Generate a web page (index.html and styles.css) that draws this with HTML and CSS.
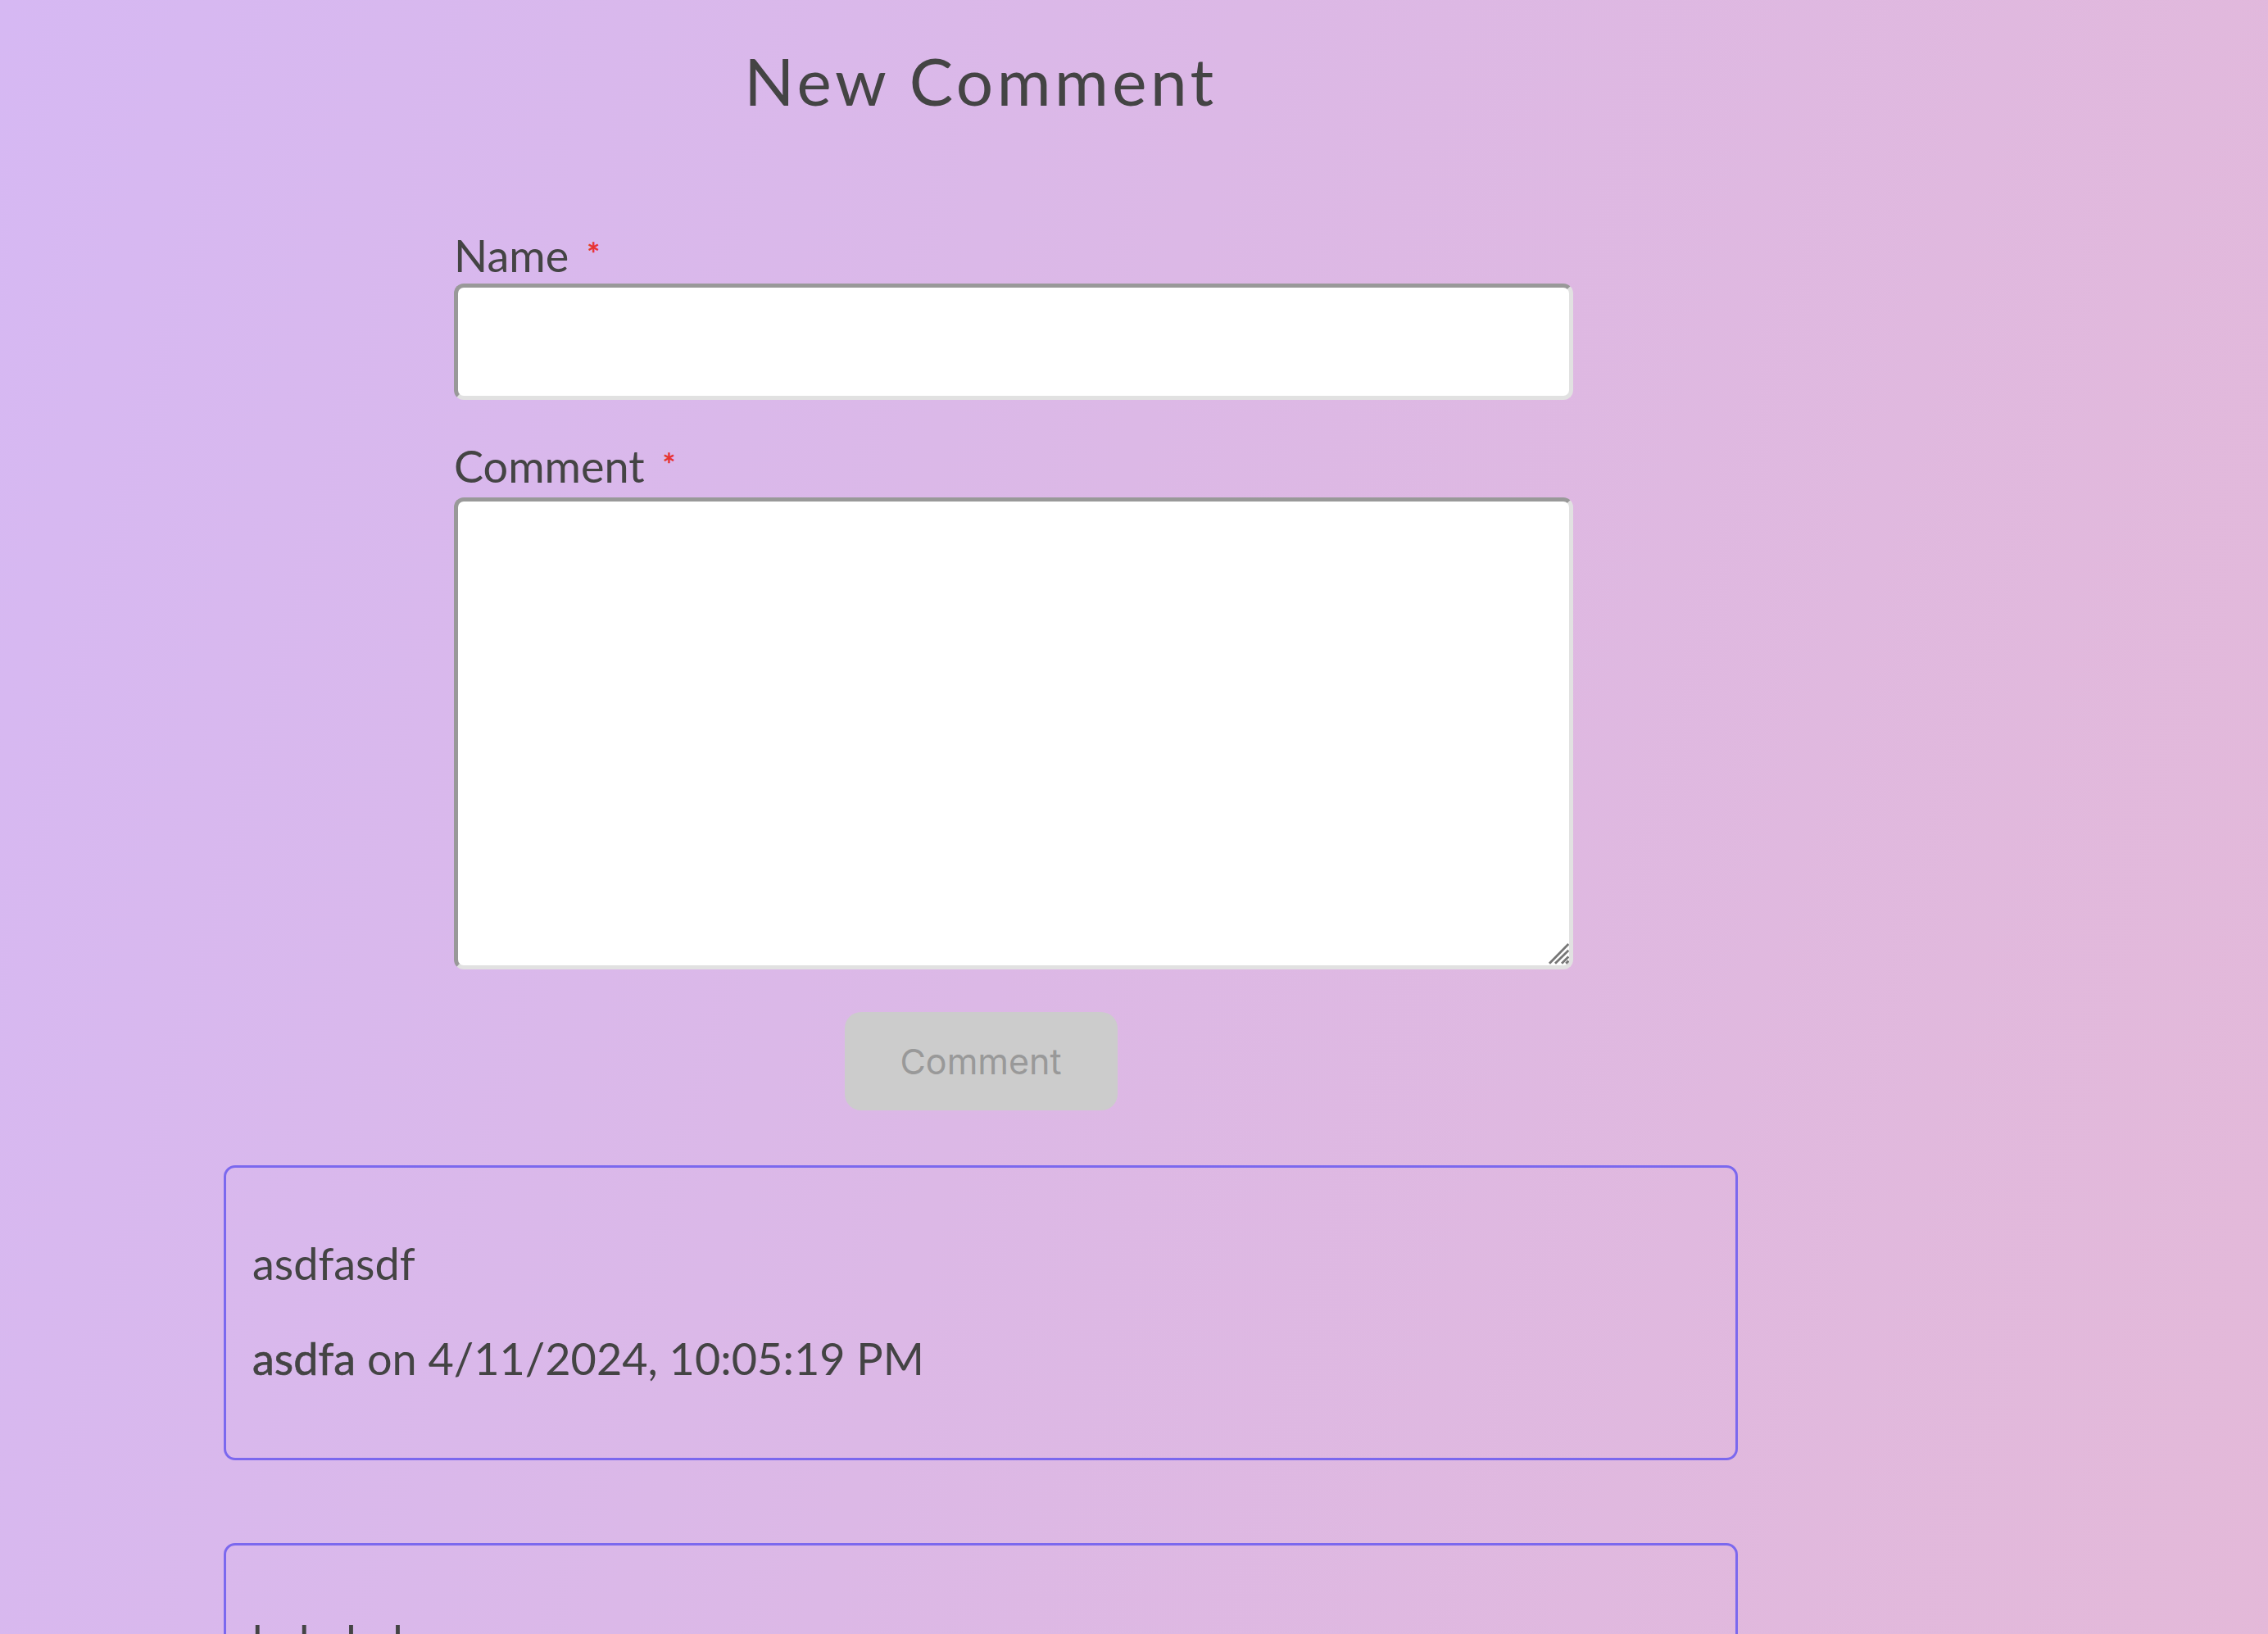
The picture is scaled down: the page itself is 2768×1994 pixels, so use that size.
FILE: index.html
```html
<!DOCTYPE html>
<html lang="en">
<head>
<meta charset="utf-8">
<title>New Comment</title>
<link rel="stylesheet" href="styles.css">
</head>
<body>
<main class="page">
  <h1 class="title">New Comment</h1>
  <form class="form">
    <label class="label" for="name">Name<span class="req">*</span></label>
    <input class="input" id="name" type="text">
    <label class="label label-comment" for="comment">Comment<span class="req">*</span></label>
    <div class="textarea-wrap">
      <textarea class="textarea" id="comment"></textarea>
      <svg class="grip" width="26" height="26" viewBox="0 0 26 26" aria-hidden="true">
        <path d="M2 24.7 L25.3 1 M9 24.7 L25.3 8.7 M17 24.7 L25.3 16.4 M22.2 24.7 L25.3 21.6" stroke="#777777" stroke-width="2.8" fill="none"/>
      </svg>
    </div>
  </form>
  <button class="submit" type="button" disabled>Comment</button>
  <section class="comments">
    <article class="card">
      <p class="card-text">asdfasdf</p>
      <p class="card-meta"><span class="author">asdfa</span> on 4/11/2024, 10:05:19 PM</p>
    </article>
    <article class="card">
      <p class="card-text">babababa</p>
      <p class="card-meta"><span class="author">bab</span> on 4/11/2024, 10:06:02 PM</p>
    </article>
  </section>
</main>
</body>
</html>
```
FILE: styles.css
```css
html, body {
  margin: 0;
  padding: 0;
}
body {
  min-height: 100vh;
  background: linear-gradient(105deg, #d6b8f3 0%, #dcb8e6 45%, #e4b9d8 100%);
  font-family: Lato, "Open Sans", sans-serif;
  color: #444444;
  overflow: hidden;
}
.page {
  width: 1848px;
  margin-left: 273px;
  padding-top: 50px;
}
.title {
  margin: 0;
  font-size: 80px;
  font-weight: 400;
  line-height: 96px;
  letter-spacing: 4.5px;
  text-align: center;
  color: #444444;
}
.form {
  width: 1366px;
  margin: 133px 0 0 281px;
}
.label {
  display: block;
  font-size: 54px;
  line-height: 66px;
  color: #444444;
}
.label-comment {
  margin-top: 48px;
}
.req {
  display: inline-block;
  vertical-align: top;
  margin: 12px 0 0 22px;
  font-size: 38px;
  line-height: 1;
  color: #e8322e;
  -webkit-text-stroke: 0.6px #e8322e;
}
.input, .textarea {
  display: block;
  box-sizing: border-box;
  width: 100%;
  margin: 1px 0 0;
  background: #ffffff;
  border-style: solid;
  border-width: 5px;
  border-color: #999999 #e1e1e1 #e1e1e1 #999999;
  border-radius: 12px;
  font: inherit;
  outline: none;
}
.input {
  height: 142px;
}
.textarea-wrap {
  position: relative;
  margin-top: 5px;
}
.textarea {
  height: 576px;
  margin: 0;
  resize: none;
}
.grip {
  position: absolute;
  right: 5px;
  bottom: 6px;
}
.submit {
  display: block;
  width: 333px;
  height: 120px;
  margin: 52px auto 0;
  border: none;
  border-radius: 20px;
  background: #cccccc;
  color: #999999;
  font-family: Inter, "Liberation Sans", sans-serif;
  font-size: 43px;
  padding: 0;
}
.comments {
  margin-top: 67px;
}
.card {
  box-sizing: border-box;
  border: 3px solid #7b68ee;
  border-radius: 14px;
  padding: 84px 32px 89px;
  margin-bottom: 101px;
}
.card-text, .card-meta {
  margin: 0;
  font-size: 54px;
  line-height: 65px;
}
.card-meta {
  margin-top: 51px;
}
.author {
  font-weight: 400;
  -webkit-text-stroke: 0.6px #444444;
}
```
